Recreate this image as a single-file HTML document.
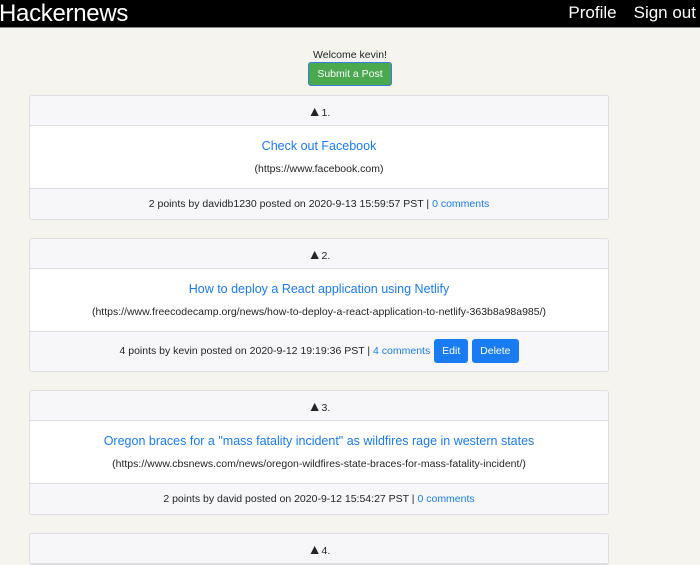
<!DOCTYPE html>
<html><head><style>
*{box-sizing:border-box;margin:0;padding:0}
body{width:700px;height:560px;overflow:hidden;background:#f5f4ef;font-family:"Liberation Sans",sans-serif;color:#212529;font-size:10.5px}
.nav{height:28px;background:#000;color:#fff;position:relative;border-bottom:1px solid #888}
.nav .b{position:absolute;left:-1px;top:0px;font-size:24px;letter-spacing:-0.3px}
.nav .r{position:absolute;right:4px;top:3px;font-size:17px}
.nav .r span{margin-left:17px}
.wel{text-align:center;margin-top:21px;line-height:12px}
.btn{display:inline-block;background:#4aa84f;color:#fff;border:1px solid #3b7ddd;border-radius:3px;padding:0 8px;height:24px;line-height:22px;font-size:10.5px;margin-top:1px}
.card{position:absolute;left:29px;width:580px;border:1px solid #dedde3;border-radius:3px;background:#fff;overflow:hidden}
.h{height:30px;background:#f7f7f9;border-bottom:1px solid #dedde3;text-align:center;line-height:30px}
.h i{font-style:normal;font-size:14px}
.bd{height:63px;text-align:center;border-bottom:1px solid #dedde3}
.t{color:#1a7cf5;font-size:12.5px;padding-top:13px;height:37px}
.f{background:#f7f7f9;text-align:center;line-height:30px}
a{color:#1a7cf5;text-decoration:none}
.bb{display:inline-block;background:#1a7cf5;color:#fff;border-radius:3px;height:24px;line-height:24px;padding:0 8px;vertical-align:middle;margin-left:1px}
</style></head><body>
<div class="nav"><div class="b">Hackernews</div><div class="r"><span>Profile</span><span>Sign out</span></div></div>
<div class="wel">Welcome kevin!<br><span class="btn">Submit a Post</span></div>
<div class="card" style="top:95px"><div class="h"><i>▲</i>1.</div><div class="bd"><div class="t">Check out Facebook</div>(https://www.facebook.com)</div><div class="f">2 points by davidb1230 posted on 2020-9-13 15:59:57 PST | <a>0 comments</a></div></div>
<div class="card" style="top:238px"><div class="h"><i>▲</i>2.</div><div class="bd"><div class="t">How to deploy a React application using Netlify</div>(https://www.freecodecamp.org/news/how-to-deploy-a-react-application-to-netlify-363b8a98a985/)</div><div class="f" style="line-height:39px;height:39px">4 points by kevin posted on 2020-9-12 19:19:36 PST | <a>4 comments</a> <span class="bb">Edit</span> <span class="bb">Delete</span></div></div>
<div class="card" style="top:390px"><div class="h"><i>▲</i>3.</div><div class="bd"><div class="t">Oregon braces for a "mass fatality incident" as wildfires rage in western states</div>(https://www.cbsnews.com/news/oregon-wildfires-state-braces-for-mass-fatality-incident/)</div><div class="f">2 points by david posted on 2020-9-12 15:54:27 PST | <a>0 comments</a></div></div>
<div class="card" style="top:533px"><div class="h"><i>▲</i>4.</div></div>
</body></html>
